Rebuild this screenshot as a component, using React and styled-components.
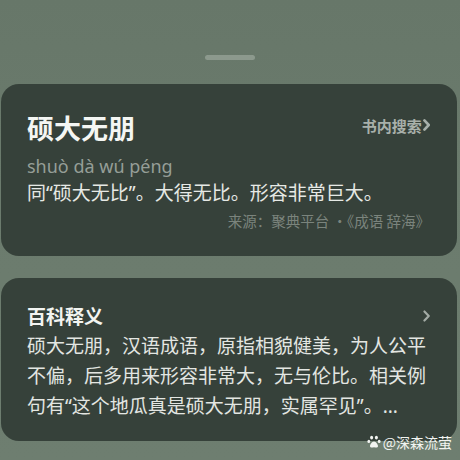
import React from 'react'
import styled, { createGlobalStyle } from 'styled-components'

const Global = createGlobalStyle`
  html, body {
    margin: 0;
    padding: 0;
  }
  body {
    font-family: "Noto Sans", "Noto Sans CJK SC", sans-serif;
  }
`

const cjk = `"Noto Sans CJK SC", "Noto Sans", sans-serif`

const Page = styled.div`
  width: 460px;
  height: 460px;
  box-sizing: border-box;
  overflow: hidden;
  background: linear-gradient(180deg, #677769 0%, #6b7b6d 40%, #6e7e70 100%);
  display: flex;
  flex-direction: column;
  padding: 55px 3px 0 1px;
`

const Handle = styled.div`
  align-self: center;
  width: 50px;
  height: 5px;
  border-radius: 3px;
  background: #8c998d;
  margin: 0 0 24px 2px;
`

const Card = styled.section`
  background: #36413a;
  border-radius: 18px;
  padding: ${p => p.$pad};
  margin-bottom: ${p => p.$gap || 0}px;
  display: flex;
  flex-direction: column;
`

const HeadRow = styled.div`
  display: flex;
  justify-content: space-between;
  align-items: center;
`

const Title = styled.h1`
  margin: 0;
  font-family: ${cjk};
  font-size: 27px;
  line-height: 36px;
  font-weight: 700;
  color: #f4f6f3;
`

const SearchLink = styled.span`
  display: flex;
  align-items: center;
  gap: 1px;
  font-family: ${cjk};
  font-size: 15px;
  font-weight: 700;
  color: #a8b0aa;
  margin-top: -6px;
`

const Pinyin = styled.div`
  margin-top: 9px;
  font-size: 18px;
  line-height: 22px;
  color: #959e97;
`

const Definition = styled.p`
  margin: 4px 0 0;
  font-size: 19px;
  line-height: 24px;
  color: #e6e9e5;
`

const Source = styled.div`
  margin-top: 6px;
  align-self: flex-end;
  font-family: ${cjk};
  font-size: 14.5px;
  line-height: 20px;
  color: #7b847d;
`

const SubTitle = styled.h2`
  margin: 0;
  font-family: ${cjk};
  font-size: 19px;
  line-height: 26px;
  font-weight: 700;
  color: #f2f4f1;
`

const Body = styled.div`
  margin-top: 2px;
  font-size: 19px;
  line-height: 30px;
  color: #e3e6e2;
`

const Line = styled.div`
  white-space: nowrap;
`

const Watermark = styled.div`
  align-self: flex-end;
  display: flex;
  align-items: center;
  gap: 2px;
  margin: -9px 5px 0 0;
  font-family: ${cjk};
  font-size: 14px;
  color: #f2f4f1;
`

const Chevron = ({ size = 12, color = '#a8b0aa', stroke = 2.2 }) => (
  <svg width={size * 0.6} height={size} viewBox="0 0 6 10">
    <path d="M1.2 1.2 L4.8 5 L1.2 8.8" fill="none" stroke={color} strokeWidth={stroke} strokeLinecap="round" strokeLinejoin="round" />
  </svg>
)

const Paw = () => (
  <svg width="14" height="14" viewBox="0 0 14 14">
    <g fill="#f2f4f1">
      <ellipse cx="4.6" cy="2.6" rx="1.5" ry="1.9" />
      <ellipse cx="9.4" cy="2.6" rx="1.5" ry="1.9" />
      <ellipse cx="1.8" cy="6.4" rx="1.4" ry="1.7" />
      <ellipse cx="12.2" cy="6.4" rx="1.4" ry="1.7" />
      <path d="M7 6.4 C5 6.4 3 9.4 3 11 C3 12.6 4.6 12.9 7 12.3 C9.4 12.9 11 12.6 11 11 C11 9.4 9 6.4 7 6.4 Z" />
    </g>
  </svg>
)

const App = () => (
  <>
    <Global />
    <Page>
      <Handle />
      <Card $pad="26px 27px 25px 26px" $gap={22}>
        <HeadRow>
          <Title>硕大无朋</Title>
          <SearchLink>
            书内搜索
            <Chevron />
          </SearchLink>
        </HeadRow>
        <Pinyin>shuò dà wú péng</Pinyin>
        <Definition>同“硕大无比”。大得无比。形容非常巨大。</Definition>
        <Source>来源：聚典平台 ·《成语 辞海》</Source>
      </Card>
      <Card $pad="25px 27px 20px 26px">
        <HeadRow>
          <SubTitle>百科释义</SubTitle>
          <Chevron size={12} color="#a3aba5" stroke={1.8} />
        </HeadRow>
        <Body>
          <Line>硕大无朋，汉语成语，原指相貌健美，为人公平</Line>
          <Line>不偏，后多用来形容非常大，无与伦比。相关例</Line>
          <Line>句有“这个地瓜真是硕大无朋，实属罕见”。...</Line>
        </Body>
      </Card>
      <Watermark>
        <Paw />
        @深森流萤
      </Watermark>
    </Page>
  </>
)

export default App
